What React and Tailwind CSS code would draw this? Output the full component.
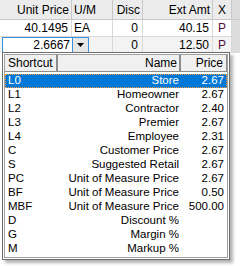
import React from "react";

const rows = [
  ["L0", "Store", "2.67"],
  ["L1", "Homeowner", "2.67"],
  ["L2", "Contractor", "2.40"],
  ["L3", "Premier", "2.67"],
  ["L4", "Employee", "2.31"],
  ["C", "Customer Price", "2.67"],
  ["S", "Suggested Retail", "2.67"],
  ["PC", "Unit of Measure Price", "2.67"],
  ["BF", "Unit of Measure Price", "0.50"],
  ["MBF", "Unit of Measure Price", "500.00"],
  ["D", "Discount %", ""],
  ["G", "Margin %", ""],
  ["M", "Markup %", ""],
];

const PriceRow = ({ code, name, price, selected }) => (
  <div
    className={
      selected
        ? "flex h-[14px] items-center bg-[#0078d7] text-white outline-1 outline-dotted outline-[#ff9a3c] -outline-offset-1"
        : "flex h-[14px] items-center"
    }
  >
    <div className="w-[53px] pl-[3px]">{code}</div>
    <div className="w-[123px] pr-[2px] text-right">{name}</div>
    <div className="flex-1 pr-[3px] text-right">{price}</div>
  </div>
);

export default function App() {
  return (
    <div
      className="relative h-[266px] w-[240px] overflow-hidden bg-white text-[11px] leading-none text-black"
      style={{ fontFamily: '"Liberation Sans", Arial, sans-serif' }}
    >
      {/* grid header */}
      <div className="flex h-[20px] border-b border-[#c8c8c8] bg-[#ececec]">
        <div className="flex w-[72px] items-center justify-end border-r border-[#c8c8c8] pr-[2px] text-[12px]">
          Unit Price
        </div>
        <div className="flex w-[41px] items-center border-r border-[#c8c8c8] pl-[2px] text-[12px]">
          U/M
        </div>
        <div className="flex w-[30px] items-center justify-end border-r border-[#c8c8c8] pr-[2px] text-[12px]">
          Disc
        </div>
        <div className="flex w-[70px] items-center justify-end border-r border-[#c8c8c8] pr-[2px] text-[12px]">
          Ext Amt
        </div>
        <div className="flex w-[19px] items-center justify-center border-r border-[#c8c8c8] text-[12px]">
          X
        </div>
        <div className="flex-1 bg-[#dcdcdc]" />
      </div>

      {/* row 1 */}
      <div className="flex h-[17px] border-b border-[#d8d8d8] text-[12px]">
        <div className="flex w-[72px] items-center justify-end border-r border-[#d8d8d8] pr-[3px]">
          40.1495
        </div>
        <div className="flex w-[41px] items-center border-r border-[#d8d8d8] pl-[2px]">
          EA
        </div>
        <div className="flex w-[30px] items-center justify-end border-r border-[#d8d8d8] pr-[4px]">
          0
        </div>
        <div className="flex w-[70px] items-center justify-end border-r border-[#d8d8d8] pr-[3px]">
          40.15
        </div>
        <div className="flex w-[19px] items-center justify-center border-r border-[#d8d8d8] text-[#52103c]">
          P
        </div>
        <div className="flex-1 bg-[#dcdcdc]" />
      </div>

      {/* row 2, editing */}
      <div className="flex h-[16px] bg-[#f3f3f3] text-[12px]">
        <div className="ml-[2px] flex w-[87px] border border-[#3c8fd8] bg-white">
          <div className="flex w-[69px] items-center justify-end pr-[2px]">2.6667</div>
          <div className="flex flex-1 items-center justify-center border-l border-[#3c8fd8] bg-[#e6e6e6]">
            <svg width="7" height="4" viewBox="0 0 7 4">
              <path d="M0 0h7L3.5 4z" fill="#000" />
            </svg>
          </div>
        </div>
        <div className="flex w-[24px] border-r border-[#d8d8d8]" />
        <div className="flex w-[30px] items-center justify-end border-r border-[#d8d8d8] pr-[4px]">
          0
        </div>
        <div className="flex w-[70px] items-center justify-end border-r border-[#d8d8d8] pr-[3px]">
          12.50
        </div>
        <div className="flex w-[19px] items-center justify-center border-r border-[#d8d8d8] text-[#52103c]">
          P
        </div>
        <div className="flex-1 bg-[#dcdcdc]" />
      </div>

      {/* dropdown popup */}
      <div className="absolute left-[2px] top-[52px] w-[228px] border border-[#6e6e6e] bg-white shadow-[3px_3px_3px_rgba(0,0,0,0.3)]">
        <div className="m-[1px] border border-[#a0a0a0]">
          <div className="flex h-[17px] bg-[#f0f0f0] text-[12px]">
            <div className="flex w-[53px] items-center border-r-2 border-b border-[#8c8c8c] pl-[3px]">
              Shortcut
            </div>
            <div className="flex w-[123px] items-center justify-end border-r-2 border-b border-[#8c8c8c] pr-[2px]">
              Name
            </div>
            <div className="flex flex-1 items-center justify-end border-r border-b border-[#8c8c8c] pr-[3px]">
              Price
            </div>
          </div>
          <div className="pt-[2px] pb-[1px] text-[11.5px]">
            {rows.map(([code, name, price], i) => (
              <PriceRow key={code} code={code} name={name} price={price} selected={i === 0} />
            ))}
          </div>
        </div>
      </div>
    </div>
  );
}
